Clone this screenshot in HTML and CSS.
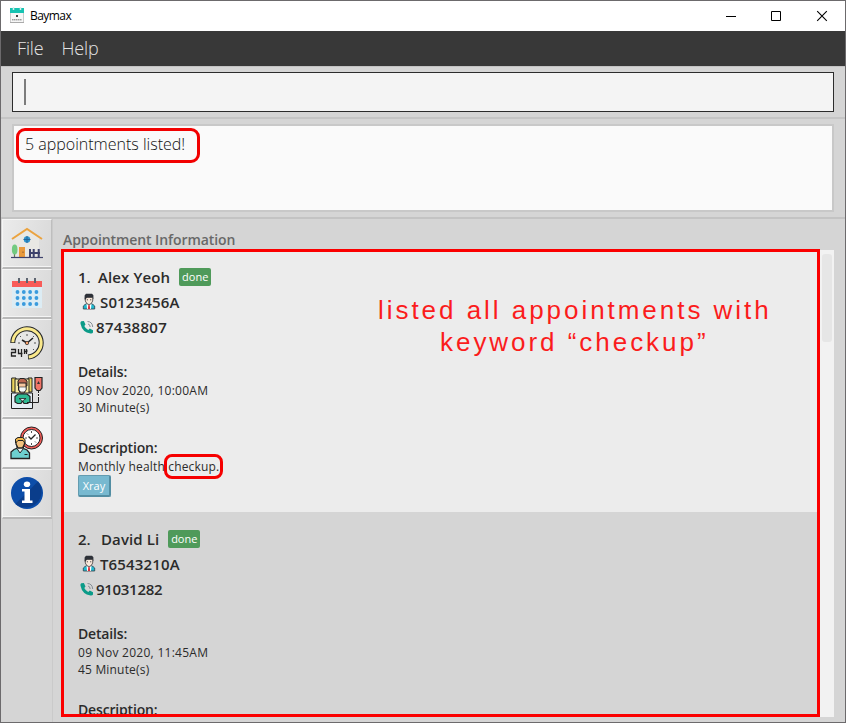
FILE: index.html
```html
<!DOCTYPE html>
<html lang="en">
<head>
<meta charset="utf-8">
<title>Baymax</title>
<link rel="stylesheet" href="styles.css">
</head>
<body>
<svg class="defs" width="0" height="0">
  <symbol id="person" viewBox="0 0 14 17">
    <path d="M1.300 16V13L3 11.500 5 10.500H9L11 11.500 12.700 13V16Z" fill="#20b9cf" stroke="#333e48" stroke-width=".8"/>
    <path d="M4.500 10.500 5 16H9L9.500 10.500Z" fill="#fff"/>
    <path d="M6.300 12H7.700L8.200 16H5.800Z" fill="#d8323c"/>
    <path d="M3.300 4.500H10.700V8L9 10.800 7 11.600 5 10.800 3.300 8Z" fill="#fbe9db" stroke="#403c3e" stroke-width=".8"/>
    <path d="M2.600 6.500V2.500L4 .8H10L11.400 2.300V6.500L10.300 4.200H5L3.600 6.500Z" fill="#2d3138"/>
    <path d="M4.800 6.800H6M8 6.800H9.300" stroke="#555"/>
  </symbol>
  <symbol id="phone" viewBox="0 0 14 14">
    <path d="M1.200 1.300 3.900 1 5.500 4.400 4.300 6Q5.500 8.500 8.200 10L9.800 8.600 13 10.200V12.500Q12.500 13.600 10.500 13.400Q2.300 12.500.5 3.800Q.2 2 1.200 1.300Z" fill="#0b9b88"/>
    <path d="M7.500 1.500Q12.300 1.700 12.700 7M8 4Q10 4.200 10.200 7" fill="none" stroke="#7b858c" stroke-width=".9"/>
  </symbol>
</svg>
<div class="window">
  <header class="titlebar">
    <svg class="app-icon" width="14" height="16" viewBox="0 0 14 16"><path d="M.5 1.500H13.500V15.500H.5Z" fill="#f7f7f7" stroke="#ccc"/><path d="M0 1H14V6H0Z" fill="#17c3b2"/><path d="M3.500 0V3M10.500 0V3" stroke="#d9efec" stroke-width="1.500"/><path d="M6 8H8V10H6Z" fill="#444"/><path d="M2 12.800H12" stroke="#777" stroke-dasharray="1.500 .4"/><path d="M0 15.500H14" stroke="#aaa"/></svg>
    <span class="app-name">Baymax</span>
    <svg class="controls" width="104" height="12" viewBox="0 0 104 12" fill="none" stroke="#000"><path d="M0 6.500H10M45.500 1.500H54.500V10.500H45.500Z"/><path d="M91.200 1.200 100.800 10.800M100.800 1.200 91.200 10.800" stroke-width="1.100"/></svg>
  </header>
  <nav class="menubar"><span class="menu-file">File</span><span class="menu-help">Help</span></nav>
  <section class="command"><div class="field"><i class="caret"></i></div></section>
  <section class="result"><div class="result-box"><span class="message">5 appointments listed!</span></div></section>
  <main class="main">
    <aside class="tabs">
      <div class="tab"><svg width="32" height="32" viewBox="0 0 32 32"><path d="M4 11 16 3 28 11V29H4Z" fill="#e9e8e4"/><path d="M1 12 16 2 31 12" fill="none" stroke="#eba33f" stroke-width="2"/><circle cx="16" cy="12.500" r="3.200" fill="#2f95cf"/><path d="M16 9V16M12.500 12.500H19.500" stroke="#23659b"/><path d="M3.500 21V30" stroke="#667b55" stroke-width="1.200"/><ellipse cx="3.700" cy="22.500" rx="2.800" ry="5" fill="#72ca80"/><path d="M8 20H14V30H8Z" fill="#e99a3d"/><path d="M12 24.500V26" stroke="#8c5930"/><path d="M19 22V30M22.700 22V30M27.700 22V30M18 26H29" stroke="#3e426c" stroke-width="2"/><path d="M0 30.500H32" stroke="#3e426c" stroke-width="1.200"/></svg></div>
      <div class="tab"><svg width="32" height="32" viewBox="0 0 32 32"><path d="M1 8H31V31H1Z" fill="#dcecf4"/><path d="M1 4H31V10H1Z" fill="#f85c59"/><path d="M8 1V6M16 1V6M24 1V6" stroke="#5d6470" stroke-width="2"/><path d="M6.500 15H26.500M6.500 21H26.500M6.500 27H26.500" fill="none" stroke="#3a9bdd" stroke-width="3.800" stroke-linecap="round" stroke-dasharray=".01 6.300"/></svg></div>
      <div class="tab"><svg width="34" height="34" viewBox="0 0 34 34"><path d="M2.800 17A14.200 14.200 0 1 1 18 31" fill="none" stroke="#26282b" stroke-width="5"/><path d="M2.800 16.300A14.200 14.200 0 1 1 18.700 31" fill="none" stroke="#fae98c" stroke-width="3"/><circle cx="17" cy="17" r="11" fill="#e7e7e6"/><path d="M17 8V10M24 10 23 11M26 17H24M24 24 23 23M10 10 11 11M8 17H10M17 24V26" stroke="#555"/><path d="M12 14 17 17 23 12" fill="none" stroke="#222" stroke-width="1.500"/><circle cx="17" cy="17" r="1.700" fill="#f6a26e" stroke="#222" stroke-width=".7"/><path d="M1 23.500H5.500V26.500H1.500V30H6M8.500 23V27.500H12.500M11.500 23V31M14.500 23V28M14.500 25.500H16.500M16.500 23V28" fill="none" stroke="#222" stroke-width="1.300"/></svg></div>
      <div class="tab"><svg width="34" height="34" viewBox="0 0 34 34"><path d="M1.700 2H6V16H1.700ZM18 2H22V16H18Z" fill="#ecd45d" stroke="#222"/><path d="M5 3H19V18H5Z" fill="#f8eba2" stroke="#222"/><path d="M1.500 17V32.500H22.500V17Z" fill="#e4edf4" stroke="#222"/><path d="M8 5 10 2.500H14L17 5V10H8Z" fill="#bc6750" stroke="#222"/><path d="M8.500 7H16V14L14 17H10.500L8.500 14Z" fill="#f6c69f" stroke="#222"/><path d="M9 11H16V14L14 16H11L9 14Z" fill="#f5f8f8" stroke="#222" stroke-width=".6"/><path d="M5 26V20.500L8 18H17L20 20.500V26L17.500 27.500H14L12.500 25 11 27.500H7.500Z" fill="#2eb992" stroke="#222" stroke-width="1.200"/><path d="M9 22.500H16L12.500 25Z" fill="#e4edf4" stroke="#222" stroke-width=".8"/><path d="M25 1.500H32V12L30 14.500H27L25 12Z" fill="#f17568" stroke="#222" stroke-width="1.200"/><path d="M28.500 5 27 8H30Z" fill="#333"/><path d="M28.500 15V26.500H17" fill="none" stroke="#222"/><path d="M28.500 17V23" stroke="#fff" stroke-dasharray="1 2"/></svg></div>
      <div class="tab selected"><svg width="34" height="34" viewBox="0 0 34 34"><circle cx="21.500" cy="12" r="11" fill="#f25c58" stroke="#222"/><circle cx="21.500" cy="12" r="8.500" fill="#fff" stroke="#222"/><path d="M21.500 5V7M28 12H26M21.500 19V17M15 12H17M17 7.500 18 8.500M26 16.500 25 15.500" stroke="#555"/><path d="M18.500 10.500 21 13 25.500 8.500" fill="none" stroke="#222" stroke-width="1.300"/><path d="M1 32.500V26L4 23.500 8 22H12L17 24 19.500 27V32.500Z" fill="#6dcfcf" stroke="#222" stroke-width="1.300"/><path d="M7 22.500 10 27 13.500 22.500V20H7Z" fill="#eff4f4" stroke="#222"/><path d="M6 15 7.500 12.500H12.500L14.500 15V18L12.500 22H8L6 18Z" fill="#f3c27e" stroke="#222" stroke-width="1.300"/><path d="M5.500 17V13L8 11.500H12.500L15 13.500V17L13 14.500H8Z" fill="#efb64a" stroke="#222"/><path d="M14.500 28.500H17.500" stroke="#222"/></svg></div>
      <div class="tab"><svg width="34" height="34" viewBox="0 0 34 34"><circle cx="17" cy="17" r="16" fill="#0c4da9"/><path d="M28 5.500A16 16 0 0 1 5.500 28Z" fill="#0a3d8b"/><ellipse cx="17" cy="8.300" rx="3.200" ry="2.800" fill="#fff"/><path d="M12 13H20V24.500H22.500V27H12V24.500H14.500V15.500H12Z" fill="#fff"/></svg></div>
    </aside>
    <section class="content">
      <h1>Appointment Information</h1>
      <div class="list-row">
        <div class="list">
          <article class="card">
            <div class="row name"><span class="num">1.</span><span class="alex">Alex Yeoh</span><b class="done">done</b></div>
            <div class="row id"><svg width="14" height="17"><use href="#person"/></svg><span class="nric">S0123456A</span></div>
            <div class="row tel"><svg width="14" height="14"><use href="#phone"/></svg><span class="number">87438807</span></div>
            <h2 class="details">Details:</h2>
            <p class="date">09 Nov 2020, 10:00AM</p>
            <p class="minutes">30 Minute(s)</p>
            <h2 class="desc">Description:</h2>
            <p class="monthly">Monthly health <span class="marked">checkup.</span></p>
            <span class="tag">Xray</span>
            <div class="note">listed all appointments with<br><span class="note-second">keyword “checkup”</span></div>
          </article>
          <article class="card even">
            <div class="row name"><span class="num two">2.</span><span class="david">David Li</span><b class="done">done</b></div>
            <div class="row id"><svg width="14" height="17"><use href="#person"/></svg><span class="nric">T6543210A</span></div>
            <div class="row tel"><svg width="14" height="14"><use href="#phone"/></svg><span class="number second">91031282</span></div>
            <h2 class="details">Details:</h2>
            <p class="date">09 Nov 2020, 11:45AM</p>
            <p class="minutes">45 Minute(s)</p>
            <h2 class="desc">Description:</h2>
          </article>
        </div>
        <div class="scroll"><div class="thumb"></div></div>
      </div>
    </section>
  </main>
</div>
</body>
</html>
```
FILE: styles.css
```css
* { box-sizing: border-box; }
body { margin: 0; font-family: "Open Sans", "Noto Sans", sans-serif; color: #2b2b2b; overflow: hidden; }
svg { display: block; flex: none; }
.defs { position: absolute; }
h1, h2, p { margin: 0; }
.window { width: 846px; height: 723px; border: 1px solid #6c6a6c; background: #d5d5d5; display: flex; flex-direction: column; overflow: hidden; }
.titlebar { height: 30px; flex: none; background: #fff; display: flex; align-items: center; padding: 0 18px 2px 9px; }
.app-name { margin-left: 6px; color: #000; font-size: 12px; letter-spacing: -.55px; }
.controls { margin: 2px -3px 0 auto; }
.menubar { height: 35px; flex: none; background: #383838; color: #e4e4e4; display: flex; align-items: center; padding: 0 0 2px 16px; gap: 18px; font-size: 18px; font-weight: 300; letter-spacing: -.15px; }
.command { height: 53px; flex: none; padding: 6px 11px 5px; border-top: 1px solid #c3c3c3; border-bottom: 2px solid #c5c5c5; }
.field { height: 40px; margin-top: -1px; background: #f4f4f4; border: 1px solid #2c2c2c; padding: 6px 0 0 11px; }
.caret { display: block; width: 2px; height: 26px; background: #7c7c7c; }
.result { height: 100px; flex: none; padding: 5px 11px; border-bottom: 2px solid #c3c3c3; }
.result-box { height: 88px; background: #fafafa; border: 2px solid #c8c8c8; padding: 2px; }
.message { display: flex; align-items: center; width: 184px; height: 35px; border: 3px solid #f20000; border-radius: 9px; padding: 0 0 4px 6px; font-size: 16px; font-weight: 300; white-space: nowrap; color: #111; }
.main { flex: 1; display: flex; min-height: 0; }
.tabs { width: 51px; flex: none; padding-left: 1px; }
.tab { height: 50px; padding-bottom: 1px; border: 1px solid #f5f5f5; border-bottom: 2px solid #b9b9b9; border-right: 1px solid #bebebe; box-shadow: inset 0 -1px #f4f4f4; background: linear-gradient(100deg, #ebebeb, #d9d9d9); display: flex; align-items: center; justify-content: center; }
.selected { background: #f3f3f3; }
.content { flex: 1; padding-left: 8px; border-left: 1px solid #cacaca; min-width: 0; }
h1 { height: 30px; padding-left: 2px; line-height: 41px; font-size: 14px; font-weight: 600; letter-spacing: -.08px; color: #686868; white-space: nowrap; }
.list-row { display: flex; height: 468px; }
.list { width: 759px; height: 468px; border: 3px solid #fb0000; overflow: hidden; background: #d5d5d5; }
.card { height: 260px; position: relative; padding: 12px 14px 0; background: #ececec; }
.even { height: 262px; padding-top: 14px; background: #d5d5d5; }
.row { display: flex; align-items: center; height: 25px; white-space: nowrap; font-size: 15px; font-weight: 600; }
.num { width: 20px; }
.alex { letter-spacing: .12px; }
.two { width: 23px; }
.david { letter-spacing: .1px; }
.nric { letter-spacing: .15px; }
.number { letter-spacing: .3px; }
.second { letter-spacing: -.3px; }
.done { height: 18px; line-height: 18px; width: 32px; margin: 1px 0 0 9px; border-radius: 2px; background: #4f9a5a; color: #fff; font-size: 11px; font-weight: 400; text-align: center; }
.id { padding-left: 4px; gap: 4px; }
.tel { padding-left: 2px; gap: 2px; }
h2 { height: 22px; margin-top: 20px; line-height: 23px; font-size: 14px; font-weight: 600; letter-spacing: -.17px; }
.details { margin-top: 21px; }
p { height: 17px; line-height: 17px; font-size: 12px; white-space: nowrap; }
.date { letter-spacing: .27px; }
.minutes { letter-spacing: .18px; }
.monthly { letter-spacing: .17px; }
.marked { position: relative; }
.marked::after { content: ""; position: absolute; left: -4px; right: -4px; top: -4px; bottom: -4px; border: 3px solid #f60000; border-radius: 8px; }
.tag { display: block; width: 33px; height: 22px; line-height: 19px; background: #78b9d0; color: #fff; border: 1px solid #649cb0; border-right: 2px solid #538ea3; border-bottom: 2px solid #538ea3; border-radius: 2px; font-size: 11px; text-align: center; }
.note { position: absolute; left: 314px; top: 42px; width: 400px; font: 26px/32px "Liberation Sans", sans-serif; letter-spacing: 2.96px; color: #fb1c1c; white-space: nowrap; }
.note-second { margin-left: 62px; }
.scroll { width: 14px; height: 467px; margin-top: 1px; padding: 4px 2px; background: #f2f2f2; }
.thumb { height: 88px; border-radius: 3px; background: #e6e6e6; }
```
